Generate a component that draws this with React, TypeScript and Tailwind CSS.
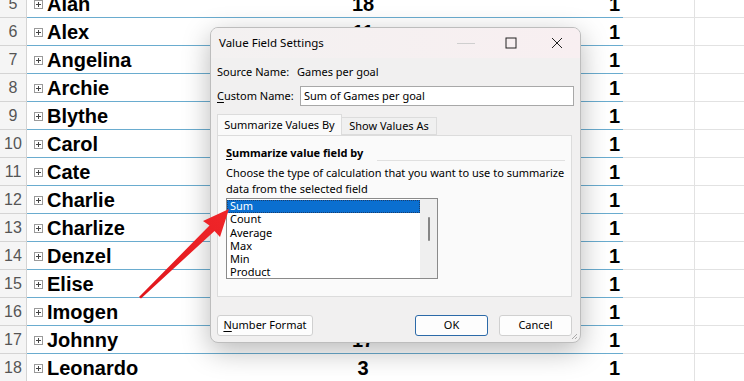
import React from "react";

const rows: [string, string, string][] = [
  ["5", "Alan", "18"],
  ["6", "Alex", "11"],
  ["7", "Angelina", "9"],
  ["8", "Archie", "12"],
  ["9", "Blythe", "7"],
  ["10", "Carol", "5"],
  ["11", "Cate", "14"],
  ["12", "Charlie", "6"],
  ["13", "Charlize", "10"],
  ["14", "Denzel", "8"],
  ["15", "Elise", "4"],
  ["16", "Imogen", "13"],
  ["17", "Johnny", "17"],
  ["18", "Leonardo", "3"],
];

const items = ["Sum", "Count", "Average", "Max", "Min", "Product"];

function Expander() {
  return (
    <span className="flex h-[9px] w-[9px] items-center justify-center border border-[#9a9a9a] bg-white">
      <svg width="7" height="7" viewBox="0 0 7 7">
        <path d="M1 3.5h5M3.5 1v5" stroke="#444" strokeWidth="1" />
      </svg>
    </span>
  );
}

function Sheet() {
  return (
    <div className="-mt-[10px] flex flex-col" style={{ fontFamily: '"Liberation Sans", Arial, sans-serif' }}>
      {rows.map(([n, name, val]) => (
        <div key={n} className="flex h-[28px]">
          <div className="flex w-[27px] shrink-0 items-center justify-center border-b border-r border-[#d4d4d4] bg-[#f5f5f5] pt-px text-[16px] text-[#555]">
            {n}
          </div>
          <div className="flex w-[596px] shrink-0 items-center border-b border-[#6aaccf] bg-white pt-px">
            <div className="flex w-[273px] items-center pl-[7px]">
              <Expander />
              <span className="ml-[4px] text-[20px] font-bold text-black">{name}</span>
            </div>
            <div className="w-[126px] text-center text-[20px] font-bold text-black">{val}</div>
            <div className="flex-1 pr-[3px] text-right text-[20px] font-bold text-black">1</div>
          </div>
          <div className="w-[72px] shrink-0 border-b border-r border-[#e2e2e2] bg-white" />
          <div className="flex-1 border-b border-[#e2e2e2] bg-white" />
        </div>
      ))}
    </div>
  );
}

function Dialog() {
  return (
    <div
      className="absolute left-[210px] top-[27px] flex h-[316px] w-[371px] flex-col overflow-hidden rounded-[8px] border border-[#bdbdbd] bg-[#f1f0f0] text-[11px] text-black shadow-[0_8px_28px_rgba(0,0,0,0.28)]"
      style={{ fontFamily: '"Noto Sans", "Open Sans", sans-serif' }}
    >
      <div className="flex h-[30px] shrink-0 items-center bg-gradient-to-r from-[#f3f1f1] to-[#f8eff1] pl-[8px] text-[11.5px]">
        <span>Value Field Settings</span>
        <div className="ml-auto flex items-center">
          <span className="mr-[30px] h-px w-[18px] bg-[#cfcfcf]" />
          <svg width="12" height="12" viewBox="0 0 12 12" className="mr-[34px]">
            <rect x="1" y="1" width="10" height="10" fill="none" stroke="#222" strokeWidth="1" />
          </svg>
          <svg width="12" height="12" viewBox="0 0 12 12" className="mr-[17px]">
            <path d="M1 1l10 10M11 1L1 11" stroke="#222" strokeWidth="1" />
          </svg>
        </div>
      </div>
      <div className="flex flex-1 flex-col px-[6px]">
        <div className="mt-[5px] flex h-[18px] items-center">
          <span className="w-[80px]">Source Name:</span>
          <span>Games per goal</span>
        </div>
        <div className="mt-[5px] flex h-[20px] items-center">
          <span className="w-[83px]">
            <span className="underline underline-offset-2">C</span>ustom Name:
          </span>
          <div className="flex h-[20px] flex-1 items-center border border-[#a8a8a8] bg-white pl-[3px]">
            Sum of Games per goal
          </div>
        </div>
        <div className="mt-[8px] flex h-[21px] items-end">
          <div className="relative z-10 flex h-[21px] w-[125px] items-center justify-center border border-b-0 border-[#dcdcdc] bg-[#fafafa]">
            Summarize Values By
          </div>
          <div className="flex h-[18px] w-[95px] items-center justify-center border border-l-0 border-[#dcdcdc] bg-[#f0f0f0]">
            Show Values As
          </div>
        </div>
        <div className="mr-[2px] flex h-[162px] flex-col border border-[#dcdcdc] bg-[#fafafa] pl-[8px] pr-[6px]">
          <div className="mt-[9px] flex h-[15px] items-end leading-[15px]">
            <span className="font-bold">
              <span className="underline underline-offset-2">S</span>ummarize value field by
            </span>
            <span className="-mb-[1px] ml-[14px] h-px flex-1 bg-[#e0e0e0]" />
          </div>
          <div className="mt-[5px] leading-[16px]">
            Choose the type of calculation that you want to use to summarize
            <br />
            data from the selected field
          </div>
          <div className="mt-[1px] flex h-[81px] w-[212px] border border-[#8a8a8a] bg-white">
            <div className="flex flex-1 flex-col pt-px">
              {items.map((it, i) => (
                <div
                  key={it}
                  className={
                    i === 0
                      ? "flex h-[13px] items-center border border-dotted border-[#1b3d6b] bg-[#0a6fd0] pl-[2px] text-white"
                      : "flex h-[13.2px] items-center pl-[3px]"
                  }
                >
                  {it}
                </div>
              ))}
            </div>
            <div className="flex w-[17px] justify-center bg-[#efefef]">
              <span className="mt-[18px] h-[24px] w-[2px] rounded bg-[#858585]" />
            </div>
          </div>
        </div>
        <div className="mt-[18px] flex h-[21px] items-center">
          <button className="flex h-[21px] w-[96px] items-center justify-center rounded-[3px] border border-[#d0d0d0] bg-[#fdfdfd]">
            <span className="underline underline-offset-2">N</span>umber Format
          </button>
          <button className="ml-auto flex h-[21px] w-[73px] items-center justify-center rounded-[3px] border border-[#2c6aa8] bg-[#fdfdfd]">
            OK
          </button>
          <button className="ml-[11px] mr-[2px] flex h-[21px] w-[73px] items-center justify-center rounded-[3px] border border-[#d0d0d0] bg-[#fdfdfd]">
            Cancel
          </button>
        </div>
      </div>
      <svg width="8" height="8" viewBox="0 0 8 8" className="absolute bottom-[2px] right-[2px]">
        <path d="M7 2L2 7M7 5L5 7" stroke="#aaa" strokeWidth="1" />
      </svg>
    </div>
  );
}

export default function App() {
  return (
    <div className="relative h-[381px] w-[744px] overflow-hidden bg-white">
      <Sheet />
      <Dialog />
      <svg className="pointer-events-none absolute left-0 top-0" width="744" height="381">
        <defs>
          <linearGradient id="ar" x1="0" y1="1" x2="1" y2="0">
            <stop offset="0" stopColor="#e0161b" />
            <stop offset="1" stopColor="#f0262a" />
          </linearGradient>
        </defs>
        <polygon
          points="229,209 220,237 214.5,231 141,298.5 139,297 209.5,225.5 203,221"
          fill="url(#ar)"
        />
      </svg>
    </div>
  );
}
